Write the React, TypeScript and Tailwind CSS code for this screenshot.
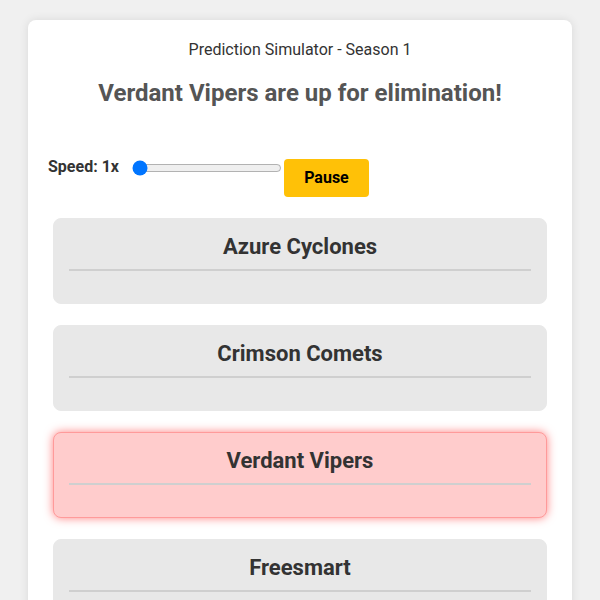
const teams = [
  { name: 'Azure Cyclones', eliminated: false },
  { name: 'Crimson Comets', eliminated: false },
  { name: 'Verdant Vipers', eliminated: true },
  { name: 'Freesmart', eliminated: false },
];

function TeamCard({ name, eliminated }: { name: string; eliminated: boolean }) {
  return (
    <div
      className={
        eliminated
          ? 'rounded-lg border border-[#ff9a9a] bg-[#ffcccc] px-[15px] pt-[15px] pb-[32px] shadow-[0_0_10px_rgba(255,0,0,0.5)]'
          : 'rounded-lg border border-[#e8e8e8] bg-[#e8e8e8] px-[15px] pt-[15px] pb-[32px]'
      }
    >
      <h3 className="text-center text-[22px] leading-[26px] font-bold text-[#333]">{name}</h3>
      <div className="mt-[9px] h-[2px] bg-[#cfcfcf]" />
    </div>
  );
}

export default function App() {
  return (
    <div className="min-h-[600px] bg-[#f0f0f0] pt-5 font-['Roboto',sans-serif]">
      <div className="mx-auto w-[544px] rounded-lg bg-white px-5 pt-5 pb-5 shadow-[0_0_10px_rgba(0,0,0,0.1)]">
        <h1 className="text-center text-base leading-[19px] text-[#333]">Prediction Simulator - Season 1</h1>
        <h2 className="mt-5 text-center text-2xl leading-[28px] font-bold text-[#555]">
          Verdant Vipers are up for elimination!
        </h2>

        <div className="mt-[51px] flex items-start">
          <label className="mr-[11px] text-base leading-[18px] font-bold text-[#333]">Speed: 1x</label>
          <input type="range" min={1} max={10} defaultValue={1} className="m-[2px] h-[16px] w-[150px]" />
          <button className="mt-px h-[38px] w-[85px] rounded bg-[#ffc107] text-base font-bold text-black">
            Pause
          </button>
        </div>

        <div className="mt-[21px] flex flex-col gap-[21px] px-[5px]">
          {teams.map((t) => (
            <TeamCard key={t.name} name={t.name} eliminated={t.eliminated} />
          ))}
        </div>
      </div>
    </div>
  );
}
